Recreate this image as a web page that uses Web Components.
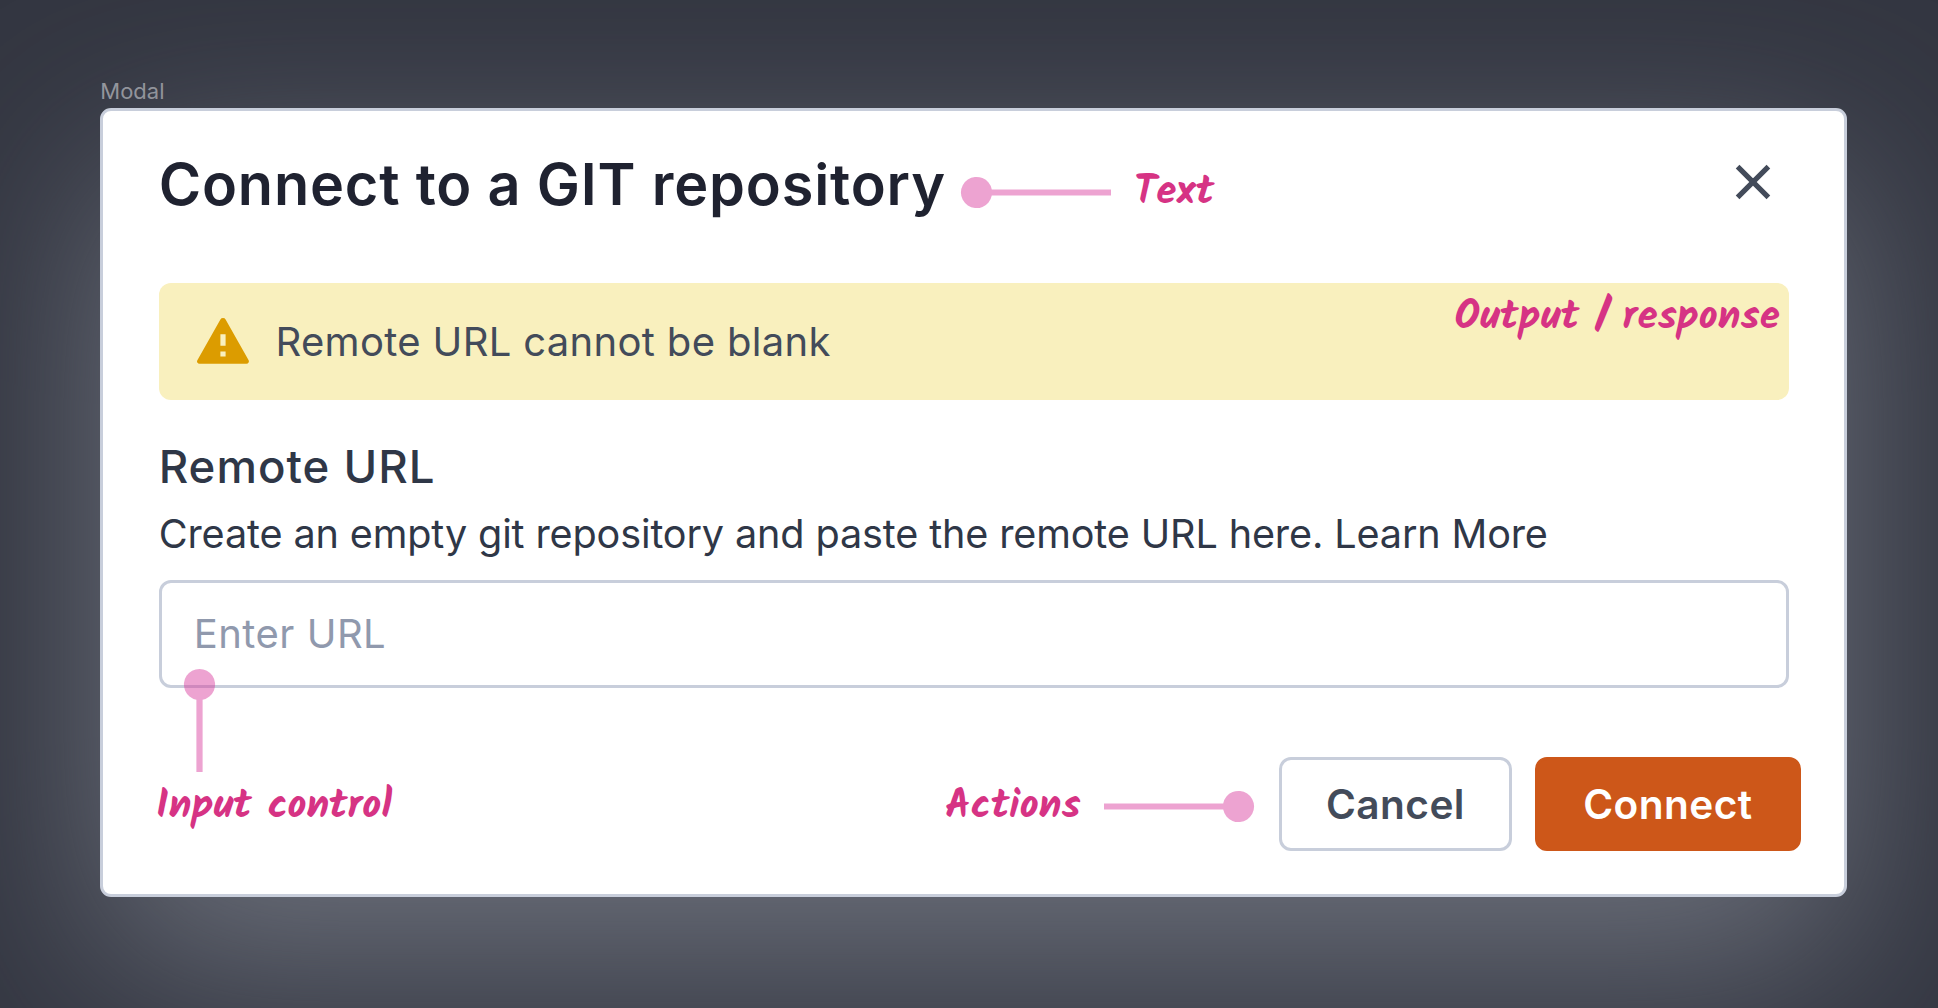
<!DOCTYPE html>
<html lang="en">
<head>
<meta charset="utf-8">
<title>Connect to a GIT repository</title>
<style>
html,body{margin:0;height:100%}
body{overflow:hidden;font-family:Inter,"Liberation Sans",sans-serif;background:#333641}
</style>
</head>
<body>
<modal-stage label="Modal">
  <modal-card>
    <modal-header>Connect to a GIT repository</modal-header>
    <alert-banner>Remote URL cannot be blank</alert-banner>
    <text-field placeholder="Enter URL">
      <span slot="label">Remote URL</span>
      <span slot="help">Create an empty git repository and paste the remote URL here. Learn More</span>
    </text-field>
    <action-bar>
      <action-button style="width:232.6px">Cancel</action-button>
      <action-button primary style="width:265.6px">Connect</action-button>
    </action-bar>
  </modal-card>
  <call-out slot="notes" text="Text" style="--x:1134px;--y:163px" line="961,176.7 150,31" dir="left"></call-out>
  <call-out slot="notes" text="Output / response" style="--x:1454.5px;--y:288px;letter-spacing:.08px"></call-out>
  <call-out slot="notes" text="Input control" style="--x:156px;--y:777px" line="183.6,668.9 31,103" dir="up"></call-out>
  <call-out slot="notes" text="Actions" style="--x:945px;--y:777px" line="1104.3,791.3 150,31" dir="right"></call-out>
</modal-stage>
<script>
const define=(name,html,setup)=>customElements.define(name,class extends HTMLElement{
  constructor(){super();this.attachShadow({mode:'open'}).innerHTML=html;}
  connectedCallback(){if(setup)setup(this,this.shadowRoot);}
});

define('modal-stage',`<style>
:host{display:flex;flex-direction:column;position:relative;box-sizing:border-box;width:1938px;height:1008px;padding:78px 91px 0 100.3px;overflow:hidden}
.label{font-size:22px;line-height:26px;height:30px;color:#989aa0}
</style><div class="label"></div><slot></slot><slot name="notes"></slot>`,
(el,root)=>{root.querySelector('.label').textContent=el.getAttribute('label');});

define('modal-card',`<style>
:host{display:flex;flex-direction:column;box-sizing:border-box;height:789px;padding:38.9px 55.4px 0 55.4px;background:#fff;border:3px solid #c8cedb;border-radius:11px;box-shadow:0 68px 200px #6e727d}
</style><slot></slot>`);

define('modal-header',`<style>
:host{display:flex;justify-content:space-between;align-items:flex-start;height:68px;margin-bottom:65px}
h1{margin:0;font-size:57.6px;line-height:68px;font-weight:600;letter-spacing:.83px;color:#1f2230;white-space:nowrap}
svg{width:36px;height:36px;margin:14.5px 18px 0 0}
</style><h1><slot></slot></h1>
<svg viewBox="0 0 36 36" fill="none" stroke="#434b5a" stroke-width="5.2"><path d="M2.6 2.6 33.4 33.4M33.4 2.6 2.6 33.4"/></svg>`);

define('alert-banner',`<style>
:host{display:flex;align-items:center;gap:26.8px;box-sizing:border-box;height:116.7px;padding-left:38px;margin-bottom:40.8px;border-radius:12px;background:#f9f0be;color:#434b5a;font-size:40px;letter-spacing:.33px;white-space:nowrap}
svg{width:52px;height:46px;flex:none}
</style><svg viewBox="0 0 52 46"><path fill="#dc9c00" d="M23.4 1.5Q24.2.1 26 .1t2.6 1.4l22.9 40.4q.8 1.4.1 2.6T49.4 45.8H2.6Q1 45.8.3 44.5T.5 41.9Z"/><path fill="#f9f0be" d="M23.4 16.2h5.2v11.5h-5.2zM23.4 33.4h5.2v5.2h-5.2z"/></svg><slot></slot>`);

define('text-field',`<style>
:host{display:flex;flex-direction:column;color:#2f3747;white-space:nowrap}
.label{font-size:45.6px;line-height:54px;font-weight:500;letter-spacing:1px;margin-bottom:15.3px}
.help{font-size:39.6px;line-height:48px;letter-spacing:-.13px;margin-bottom:22px}
.box{display:flex;align-items:center;box-sizing:border-box;height:108px;padding:0 32px;border:3px solid #c8cedb;border-radius:12px;font-size:40px;letter-spacing:.49px;color:#9099ad}
</style><div class="label"><slot name="label"></slot></div><div class="help"><slot name="help"></slot></div><div class="box"></div>`,
(el,root)=>{root.querySelector('.box').textContent=el.getAttribute('placeholder');});

define('action-bar',`<style>
:host{display:flex;justify-content:flex-end;gap:23.3px;margin:69.7px -12px 0 0}
</style><slot></slot>`);

define('action-button',`<style>
:host{display:flex;align-items:center;justify-content:center;box-sizing:border-box;height:93.3px;border:3px solid #c8cedb;border-radius:12px;font-size:40.6px;font-weight:600;letter-spacing:.45px;color:#434b5a}
:host([primary]){background:#cd5719;border-color:#cd5719;color:#fff}
</style><slot></slot>`);

define('call-out',`<style>
:host{display:contents}
.text{position:absolute;left:var(--x);top:var(--y);font:700 41px/60px Kalam,"Caveat Brush",cursive;color:#d63384;white-space:nowrap}
svg{position:absolute;opacity:.45;overflow:visible}
</style><svg fill="#d63399"></svg><div class="text"></div>`,
(el,root)=>{
  root.querySelector('.text').textContent=el.getAttribute('text');
  const svg=root.querySelector('svg'),line=el.getAttribute('line');
  if(!line){svg.remove();return;}
  const [x,y,w,h]=line.split(/[ ,]/).map(Number);
  svg.style.cssText=`left:${x}px;top:${y}px;width:${w}px;height:${h}px`;
  svg.innerHTML={
    left:`<path d="M30.8 12.4A15.6 15.6 0 1 0 30.8 18.6H${w}V12.4Z"/>`,
    right:`<path d="M${w-30.8} 12.4A15.6 15.6 0 1 1 ${w-30.8} 18.6H0V12.4Z"/>`,
    up:`<path d="M12.4 30.8A15.6 15.6 0 1 1 18.6 30.8V${h}H12.4Z"/>`
  }[el.getAttribute('dir')];
});
</script>
</body>
</html>
